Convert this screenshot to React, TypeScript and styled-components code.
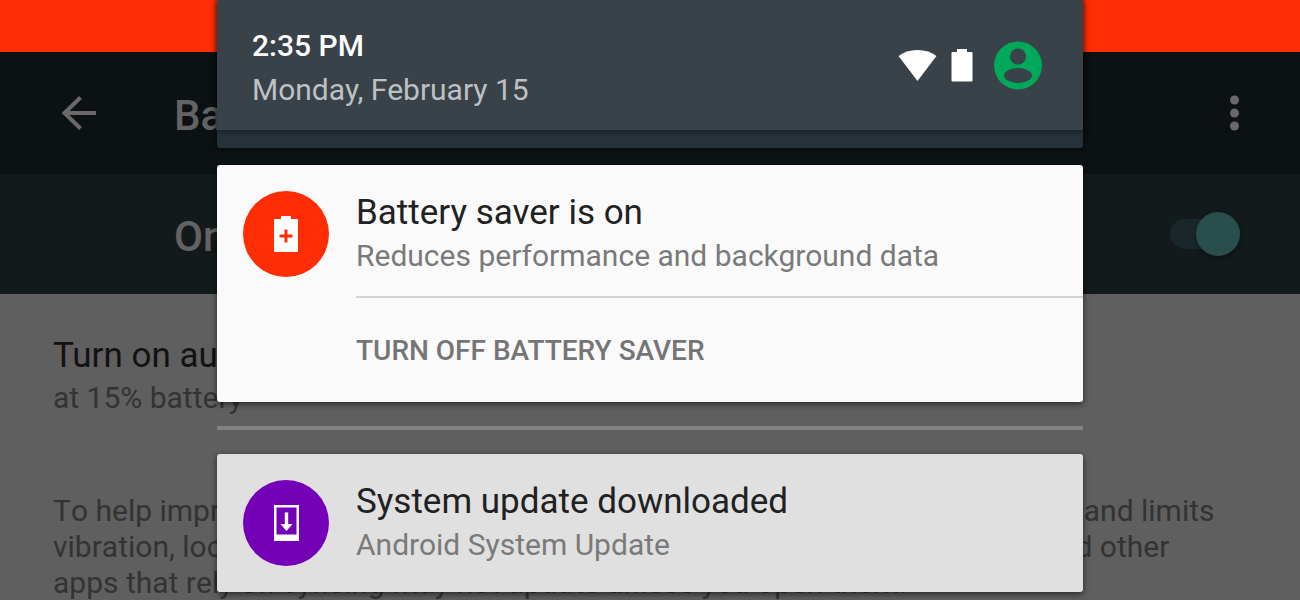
import React from "react";
import styled, { createGlobalStyle } from "styled-components";

const GlobalStyle = createGlobalStyle`
  *, *::before, *::after { box-sizing: border-box; }
  body {
    margin: 0;
    background: #5f5f5f;
    font-family: Roboto, "Liberation Sans", sans-serif;
  }
  h1, h2, p { margin: 0; font-weight: 400; }
`;

const Screen = styled.div`
  position: relative;
  min-height: 100vh;
  max-height: 100vh;
  overflow: hidden;
  background: #5f5f5f;
`;

const StatusBar = styled.div`
  height: 52px;
  background: #ff2d04;
`;

const AppBar = styled.header`
  display: flex;
  align-items: center;
  height: 122px;
  padding: 0 52px;
  background: #0c1114;
`;

const AppTitle = styled.h1`
  flex: 1;
  margin-left: 70px;
  padding-top: 6px;
  color: #636363;
  font-size: 42px;
  font-weight: 500;
  line-height: 48px;
`;

const IconButton = styled.button`
  display: flex;
  padding: 0;
  border: 0;
  background: none;
  color: #6a6868;
  cursor: pointer;
`;

const SwitchRow = styled.label`
  display: flex;
  align-items: center;
  justify-content: space-between;
  height: 120px;
  padding: 0 60px 0 174px;
  background: #131a1c;
  color: #636363;
  font-size: 42px;
  font-weight: 500;
  line-height: 48px;
`;

const SwitchLabel = styled.span`
  padding-top: 6px;
`;

const Switch = styled.input`
  appearance: none;
  display: flex;
  align-items: center;
  justify-content: flex-end;
  width: 70px;
  height: 30px;
  margin: 0;
  border-radius: 15px;
  background: #19272a;
  cursor: pointer;

  &::before {
    content: "";
    width: 44px;
    height: 44px;
    flex: none;
    border-radius: 50%;
    background: #284f4b;
    box-shadow: 0 2px 4px rgba(0, 0, 0, 0.4);
  }
  &:not(:checked) { justify-content: flex-start; }
`;

const Settings = styled.main`
  padding: 40px 66px 0 53px;
`;

const SettingTitle = styled.h2`
  margin-bottom: 2px;
  color: #121212;
  font-size: 35px;
  line-height: 44px;
`;

const SettingText = styled.p`
  color: #333;
  font-size: 30px;
  line-height: 36px;
`;

const Explanation = styled(SettingText)`
  margin-top: 77px;
  font-kerning: none;
`;

const Shade = styled.aside`
  position: absolute;
  inset: 0 217px auto;
  display: flex;
  flex-direction: column;
`;

const ShadeHeader = styled.header`
  height: 148px;
  border-radius: 0 0 3px 3px;
  background: #243239;
  box-shadow: 0 0 6px rgba(0, 0, 0, 0.6);
`;

const ShadeSummary = styled.div`
  display: flex;
  align-items: center;
  justify-content: space-between;
  height: 130px;
  padding: 0 41px 0 35px;
  background: #384248;
  box-shadow: 0 1px 6px rgba(0, 0, 0, 0.4);
`;

const Clock = styled.div`
  padding-top: 6px;
`;

const Time = styled.p`
  color: #fff;
  font-size: 30px;
  font-weight: 500;
  line-height: 44px;
`;

const DateText = styled(Time)`
  color: #bdc1c3;
  font-weight: 400;
`;

const StatusIcons = styled.div`
  display: flex;
  align-items: center;
`;

const Card = styled.article<{ $background: string }>`
  border-radius: 3px;
  background: ${(p) => p.$background};
  box-shadow: 0 2px 6px rgba(0, 0, 0, 0.6);
`;

const BatteryCard = styled(Card)`
  margin-top: 17px;
`;

const CardBody = styled.div`
  display: flex;
  align-items: center;
  gap: 27px;
  height: 138px;
  padding: 0 26px;
`;

const Badge = styled.div<{ $color: string }>`
  display: flex;
  align-items: center;
  justify-content: center;
  width: 86px;
  height: 86px;
  border-radius: 50%;
  background: ${(p) => p.$color};
`;

const CardTitle = styled.h2`
  color: #212121;
  font-size: 35px;
  line-height: 44px;
`;

const CardText = styled.p`
  color: #7a7a7a;
  font-size: 30px;
  line-height: 42px;
`;

const CardAction = styled.button`
  display: block;
  width: calc(100% - 139px);
  height: 106px;
  margin-left: 139px;
  margin-top: -7px;
  padding: 2px 0 0;
  border: 0;
  border-top: 2px solid #d4d4d4;
  background: none;
  color: #757575;
  font: 500 28px/36px Roboto, "Liberation Sans", sans-serif;
  text-align: left;
  text-transform: uppercase;
  cursor: pointer;
`;

const Divider = styled.hr`
  width: 100%;
  height: 4px;
  margin: 24px 0;
  border: 0;
  background: #828282;
`;

export default function App() {
  return (
    <>
      <GlobalStyle />
      <Screen>
        <StatusBar />
        <AppBar>
          <IconButton aria-label="Back">
            <svg width="52" height="52" viewBox="0 0 52 52" fill="none" stroke="currentColor" strokeWidth="4">
              <path d="M44 26H12M28.500 10.500L12.500 26l16 15.500" />
            </svg>
          </IconButton>
          <AppTitle>Battery saver</AppTitle>
          <IconButton aria-label="More options">
            <svg width="28" height="52" viewBox="0 0 28 52" fill="currentColor">
              <circle cx="14.500" cy="13" r="4.500" />
              <circle cx="14.500" cy="26" r="4.500" />
              <circle cx="14.500" cy="39" r="4.500" />
            </svg>
          </IconButton>
        </AppBar>
        <SwitchRow>
          <SwitchLabel>On</SwitchLabel>
          <Switch type="checkbox" role="switch" defaultChecked />
        </SwitchRow>
        <Settings>
          <SettingTitle>Turn on automatically</SettingTitle>
          <SettingText>at 15% battery</SettingText>
          <Explanation>
            To help improve battery life, battery saver reduces your device’s performance and limits
            vibration, location services, and most background data. Email, messaging, and other apps
            that rely on syncing may not update unless you open them.
          </Explanation>
        </Settings>

        <Shade>
          <ShadeHeader>
            <ShadeSummary>
              <Clock>
                <Time>2:35 PM</Time>
                <DateText>Monday, February 15</DateText>
              </Clock>
              <StatusIcons>
                <svg width="144" height="50" viewBox="0 0 144 50" aria-hidden="true">
                  <path fill="#fff" d="M0.500 16Q8 10 19.500 10T38.500 16L19.500 41z" />
                  <path fill="#fff" d="M54.500 12h4.500V9h10v3h4.500q1 0 1 1v27.500q0 1-1 1H54.500q-1 0-1-1V13q0-1 1-1z" />
                  <path
                    fill="#00a859"
                    fillRule="evenodd"
                    d="M120 1.500a24 24 0 1 0 0 48a24 24 0 1 0 0-48zM120 8.500a8 8 0 1 1 0 16a8 8 0 1 1 0-16zM120 28c8 0 14 4 14 7.500s-6 7.500-14 7.500s-14-4-14-7.500s6-7.500 14-7.500z"
                  />
                </svg>
              </StatusIcons>
            </ShadeSummary>
          </ShadeHeader>

          <BatteryCard $background="#fafafa">
            <CardBody>
              <Badge $color="#ff2d04">
                <svg width="26" height="38" viewBox="0 0 26 38" aria-hidden="true">
                  <path
                    fill="#fff"
                    fillRule="evenodd"
                    d="M2 4h6V1h10v3h6q1 0 1 1v31q0 1-1 1H2q-1 0-1-1V5q0-1 1-1zM11.500 14.500v5h-5v3h5v5h3v-5h5v-3h-5v-5z"
                  />
                </svg>
              </Badge>
              <div>
                <CardTitle>Battery saver is on</CardTitle>
                <CardText>Reduces performance and background data</CardText>
              </div>
            </CardBody>
            <CardAction>Turn off battery saver</CardAction>
          </BatteryCard>

          <Divider />

          <Card $background="#e0e0e0">
            <CardBody>
              <Badge $color="#7400b8">
                <svg width="26" height="38" viewBox="0 0 26 38" aria-hidden="true">
                  <path fill="#fff" fillRule="evenodd" d="M1 1h25v36H1zM3.500 3.500v27h20v-27z" />
                  <path fill="#fff" d="M11.800 8.500h3.400v11.500h4.300L13.500 27l-6-7h4.300z" />
                </svg>
              </Badge>
              <div>
                <CardTitle>System update downloaded</CardTitle>
                <CardText>Android System Update</CardText>
              </div>
            </CardBody>
          </Card>
        </Shade>
      </Screen>
    </>
  );
}
